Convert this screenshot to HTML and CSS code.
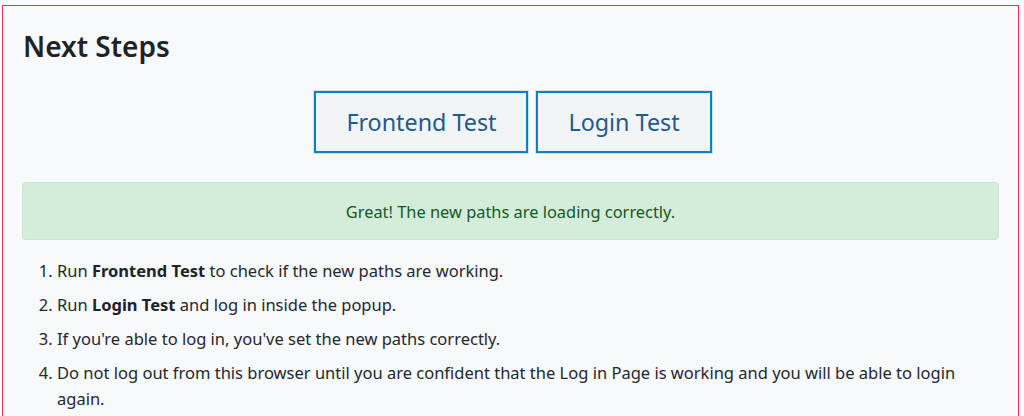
FILE: index.html
```html
<!DOCTYPE html>
<html lang="en">
<head>
<meta charset="utf-8">
<title>Next Steps</title>
<link rel="stylesheet" href="styles.css">
</head>
<body>
<section class="panel">
  <h2 class="title">Next Steps</h2>
  <div class="actions">
    <button class="btn" type="button">Frontend Test</button>
    <button class="btn" type="button">Login Test</button>
  </div>
  <div class="alert">Great! The new paths are loading correctly.</div>
  <ol class="steps">
    <li>Run <strong>Frontend Test</strong> to check if the new paths are working.</li>
    <li>Run <strong>Login Test</strong> and log in inside the popup.</li>
    <li>If you're able to log in, you've set the new paths correctly.</li>
    <li>Do not log out from this browser until you are confident that the Log in Page is working and you will be able to login again.</li>
  </ol>
</section>
</body>
</html>
```

FILE: styles.css
```css
html, body {
  margin: 0;
  padding: 0;
  background: #ffffff;
}
body {
  font-family: "Noto Sans", "Open Sans", sans-serif;
  color: #23282d;
  padding: 5px 5px 0 2px;
}
.panel {
  background: #f8f9fb;
  border: 1px solid #e2394e;
  border-bottom: none;
  padding: 19px 19px 10px 19px;
  height: 420px;
  box-sizing: border-box;
}
.title {
  margin: 4px 0 0 1px;
  font-size: 28px;
  font-weight: 600;
  line-height: 34px;
  color: #1d2327;
}
.actions {
  display: flex;
  justify-content: center;
  gap: 8px;
  margin-top: 28px;
  padding-left: 5px;
}
.btn {
  font-family: inherit;
  font-size: 23.3px;
  color: #225a8a;
  background: #f2f5f7;
  border: 2px solid #0b7ec1;
  box-shadow: 0 0 0 1px #cfe3f1;
  height: 62px;
  padding: 0 30px;
  border-radius: 0;
}
.alert {
  margin-top: 29px;
  height: 58px;
  box-sizing: border-box;
  background: #d4edda;
  border: 1px solid #c8e6cf;
  border-radius: 4px;
  color: #155724;
  display: flex;
  align-items: center;
  justify-content: center;
  font-size: 16.4px;
}
.steps {
  margin: 18px 0 0 0;
  padding-left: 35px;
  font-size: 16.5px;
  line-height: 26px;
  color: #23282d;
}
.steps li {
  margin-bottom: 8px;
}
.steps strong {
  font-weight: 700;
  color: #1d2327;
}
```
